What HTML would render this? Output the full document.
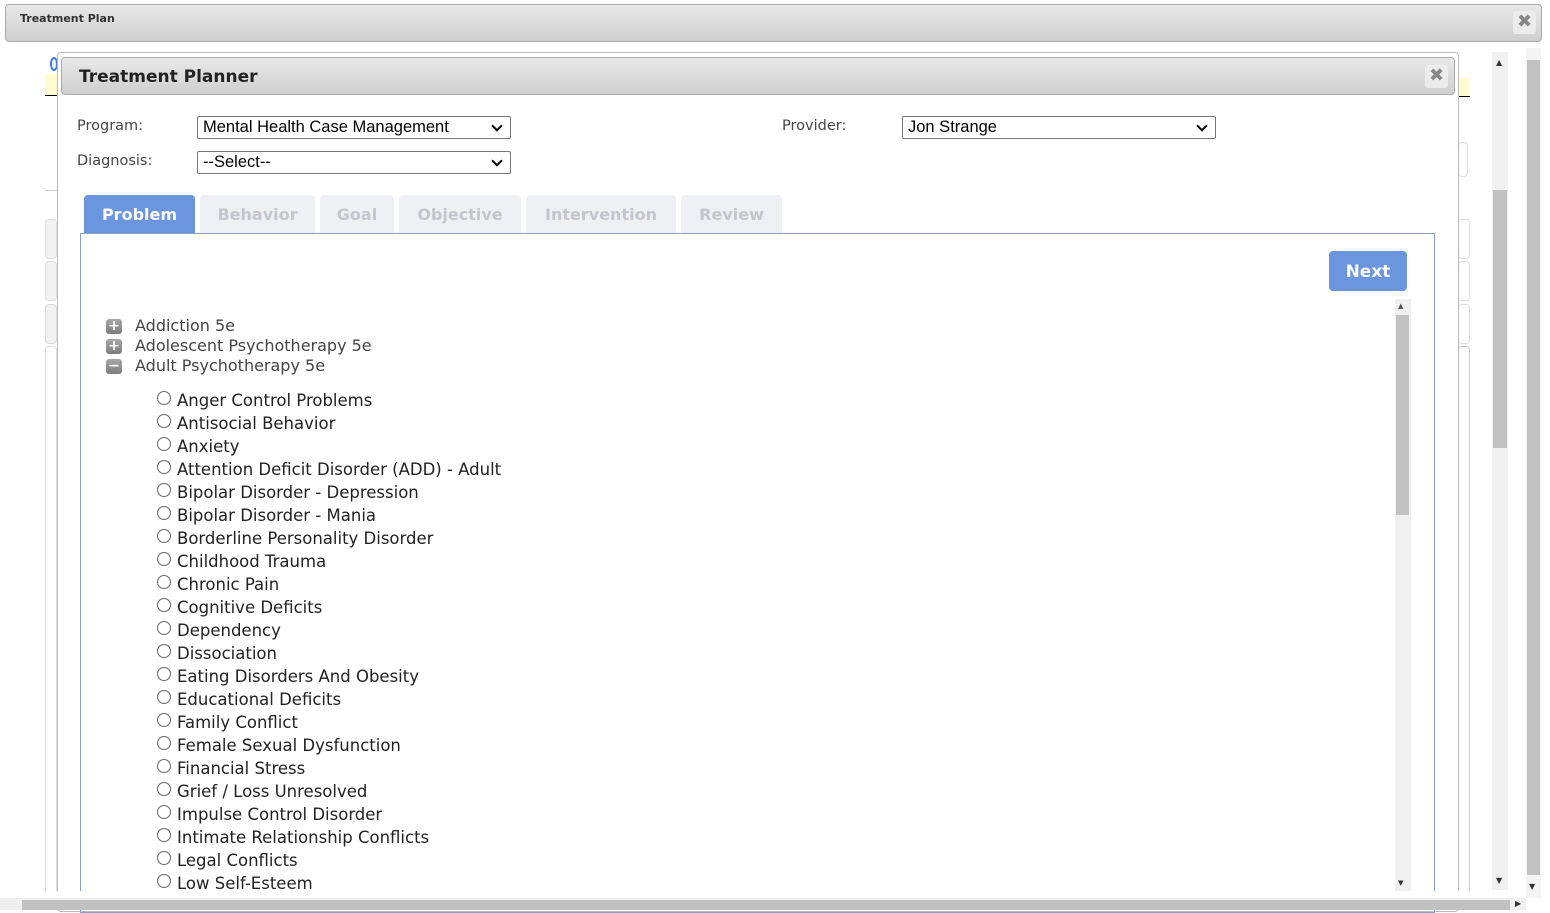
<!DOCTYPE html>
<html><head><meta charset="utf-8"><style>
*{box-sizing:border-box;margin:0;padding:0}
body{width:1550px;height:910px;overflow:hidden;background:#fff;position:relative;font-family:"DejaVu Sans",Verdana,sans-serif}
.a{position:absolute}
.hdr{background:linear-gradient(#e8e8e8,#cfcfcf);border:1px solid #aaa;border-radius:4px}
.x{background:#ececec;border-radius:3px;color:#888;font-weight:bold;text-align:center;font-size:18px;line-height:22px}
.lbl{font-size:14.5px;color:#444}
.sel{border:1px solid #767676;border-radius:2px;background:#fff;font-family:"Liberation Sans",Arial,sans-serif;font-size:16.5px;color:#000;padding-left:5px;line-height:21px;height:23px}
.sel:after{content:"";position:absolute;right:9px;top:5px;width:6px;height:6px;border-right:2px solid #000;border-bottom:2px solid #000;transform:rotate(45deg)}
.tab{top:195px;height:39px;background:#eef0f4;color:#c3c6cc;font-weight:bold;font-size:16px;text-align:center;line-height:40px;border-radius:4px 4px 0 0}
.tree{font-size:16px;color:#444;left:135px}
.ic{left:106px;width:16px;height:15px;background:linear-gradient(#a8a8a8,#7c7c7c);border-radius:3px;color:#fff;font-size:14px;font-weight:bold;text-align:center;line-height:14px}
.r{left:157px;font-size:16.5px;color:#222}
.r i{display:inline-block;width:14px;height:14px;border:1px solid #666;border-radius:50%;margin-right:6px;vertical-align:1px}
.sb{background:#f0f0f0}
.th{background:#c1c1c1}
</style></head><body>
<div class="a" style="left:45px;top:74px;width:12px;height:22px;background:#fffcd0;border-bottom:1px solid #000"></div>
<div class="a" style="left:50px;top:57px;width:8px;height:14px;border:2px solid #3a7ad8;border-radius:50%"></div>
<div class="a" style="left:45px;top:190px;width:12px;border-top:1px solid #ccc"></div>
<div class="a" style="left:45px;top:219px;width:12px;height:40px;border:1px solid #ddd;border-radius:4px;background:#f2f2f2"></div>
<div class="a" style="left:45px;top:261px;width:12px;height:40px;border:1px solid #ddd;border-radius:4px;background:#f2f2f2"></div>
<div class="a" style="left:45px;top:304px;width:12px;height:40px;border:1px solid #ddd;border-radius:4px;background:#f2f2f2"></div>
<div class="a" style="left:45px;top:346px;width:12px;height:560px;border:1px solid #ddd;border-radius:4px"></div>
<div class="a" style="left:1458px;top:78px;width:12px;height:19px;background:#fffcd0;border-bottom:1px solid #000"></div>
<div class="a" style="left:1458px;top:142px;width:10px;height:35px;border:1px solid #ddd;border-radius:4px"></div>
<div class="a" style="left:1458px;top:219px;width:12px;height:40px;border:1px solid #ddd;border-radius:4px"></div>
<div class="a" style="left:1458px;top:261px;width:12px;height:40px;border:1px solid #ddd;border-radius:4px"></div>
<div class="a" style="left:1458px;top:304px;width:12px;height:40px;border:1px solid #ddd;border-radius:4px"></div>
<div class="a" style="left:1458px;top:346px;width:12px;height:560px;border:1px solid #ccc;border-radius:4px"></div>
<div class="a hdr" style="left:5px;top:4px;width:1537px;height:38px"></div>
<div class="a" style="left:20px;top:12px;font-size:11px;font-weight:bold;color:#333">Treatment Plan</div>
<div class="a x" style="left:1513px;top:11px;width:23px;height:23px">✖</div>
<div class="a sb" style="left:1492px;top:52px;width:16px;height:838px"></div>
<div class="a th" style="left:1493px;top:190px;width:14px;height:258px"></div>
<div class="a" style="left:1496px;top:58px;font-size:8px;color:#333">▲</div>
<div class="a" style="left:1496px;top:876px;font-size:8px;color:#333">▼</div>
<div class="a sb" style="left:1526px;top:48px;width:15px;height:850px;background:#f4f4f4"></div>
<div class="a th" style="left:1527px;top:60px;width:13px;height:815px"></div>
<div class="a" style="left:1529px;top:882px;font-size:8px;color:#333">▼</div>
<div class="a" style="left:57px;top:52px;width:1402px;height:860px;border:1px solid #bbb;border-radius:4px;background:#fff"></div>
<div class="a hdr" style="left:61px;top:57px;width:1394px;height:38px"></div>
<div class="a" style="left:79px;top:67px;font-size:17px;font-weight:bold;color:#222">Treatment Planner</div>
<div class="a x" style="left:1425px;top:65px;width:23px;height:23px">✖</div>
<div class="a lbl" style="left:77px;top:118px">Program:</div>
<div class="a sel" style="left:197px;top:116px;width:314px">Mental Health Case Management</div>
<div class="a lbl" style="left:77px;top:153px">Diagnosis:</div>
<div class="a sel" style="left:197px;top:151px;width:314px">--Select--</div>
<div class="a lbl" style="left:782px;top:118px">Provider:</div>
<div class="a sel" style="left:902px;top:116px;width:314px">Jon Strange</div>
<div class="a tab" style="left:84px;width:111px;background:#6b95df;color:#fff">Problem</div>
<div class="a tab" style="left:200px;width:115px">Behavior</div>
<div class="a tab" style="left:320px;width:74px">Goal</div>
<div class="a tab" style="left:399px;width:122px">Objective</div>
<div class="a tab" style="left:526px;width:150px">Intervention</div>
<div class="a tab" style="left:681px;width:101px">Review</div>
<div class="a" style="left:80px;top:233px;width:1355px;height:680px;border:1px solid #8aa0cc"></div>
<div class="a" style="left:1329px;top:251px;width:78px;height:40px;background:#6b95df;border-radius:4px;color:#fff;font-weight:bold;font-size:17px;text-align:center;line-height:42px">Next</div>
<div class="a sb" style="left:1395px;top:299px;width:16px;height:592px"></div>
<div class="a th" style="left:1396px;top:315px;width:13px;height:200px"></div>
<div class="a" style="left:1398px;top:302px;font-size:7px;color:#555">▲</div>
<div class="a" style="left:1398px;top:879px;font-size:7px;color:#333">▼</div>
<div class="a ic" style="top:319px">+</div><div class="a tree" style="top:316px">Addiction 5e</div>
<div class="a ic" style="top:339px">+</div><div class="a tree" style="top:336px">Adolescent Psychotherapy 5e</div>
<div class="a ic" style="top:359px">−</div><div class="a tree" style="top:356px">Adult Psychotherapy 5e</div>
<div class="a r" style="top:391px"><i></i>Anger Control Problems</div>
<div class="a r" style="top:414px"><i></i>Antisocial Behavior</div>
<div class="a r" style="top:437px"><i></i>Anxiety</div>
<div class="a r" style="top:460px"><i></i>Attention Deficit Disorder (ADD) - Adult</div>
<div class="a r" style="top:483px"><i></i>Bipolar Disorder - Depression</div>
<div class="a r" style="top:506px"><i></i>Bipolar Disorder - Mania</div>
<div class="a r" style="top:529px"><i></i>Borderline Personality Disorder</div>
<div class="a r" style="top:552px"><i></i>Childhood Trauma</div>
<div class="a r" style="top:575px"><i></i>Chronic Pain</div>
<div class="a r" style="top:598px"><i></i>Cognitive Deficits</div>
<div class="a r" style="top:621px"><i></i>Dependency</div>
<div class="a r" style="top:644px"><i></i>Dissociation</div>
<div class="a r" style="top:667px"><i></i>Eating Disorders And Obesity</div>
<div class="a r" style="top:690px"><i></i>Educational Deficits</div>
<div class="a r" style="top:713px"><i></i>Family Conflict</div>
<div class="a r" style="top:736px"><i></i>Female Sexual Dysfunction</div>
<div class="a r" style="top:759px"><i></i>Financial Stress</div>
<div class="a r" style="top:782px"><i></i>Grief / Loss Unresolved</div>
<div class="a r" style="top:805px"><i></i>Impulse Control Disorder</div>
<div class="a r" style="top:828px"><i></i>Intimate Relationship Conflicts</div>
<div class="a r" style="top:851px"><i></i>Legal Conflicts</div>
<div class="a r" style="top:874px"><i></i>Low Self-Esteem</div>
<div class="a" style="left:0;top:891px;width:1492px;height:7px;background:#fff"></div>
<div class="a sb" style="left:0;top:898px;width:1526px;height:12px;background:#f0f0f0"></div>
<div class="a th" style="left:22px;top:900px;width:1488px;height:10px"></div>
<div class="a" style="left:1515px;top:899px;font-size:8px;color:#333">▶</div>
</body></html>
